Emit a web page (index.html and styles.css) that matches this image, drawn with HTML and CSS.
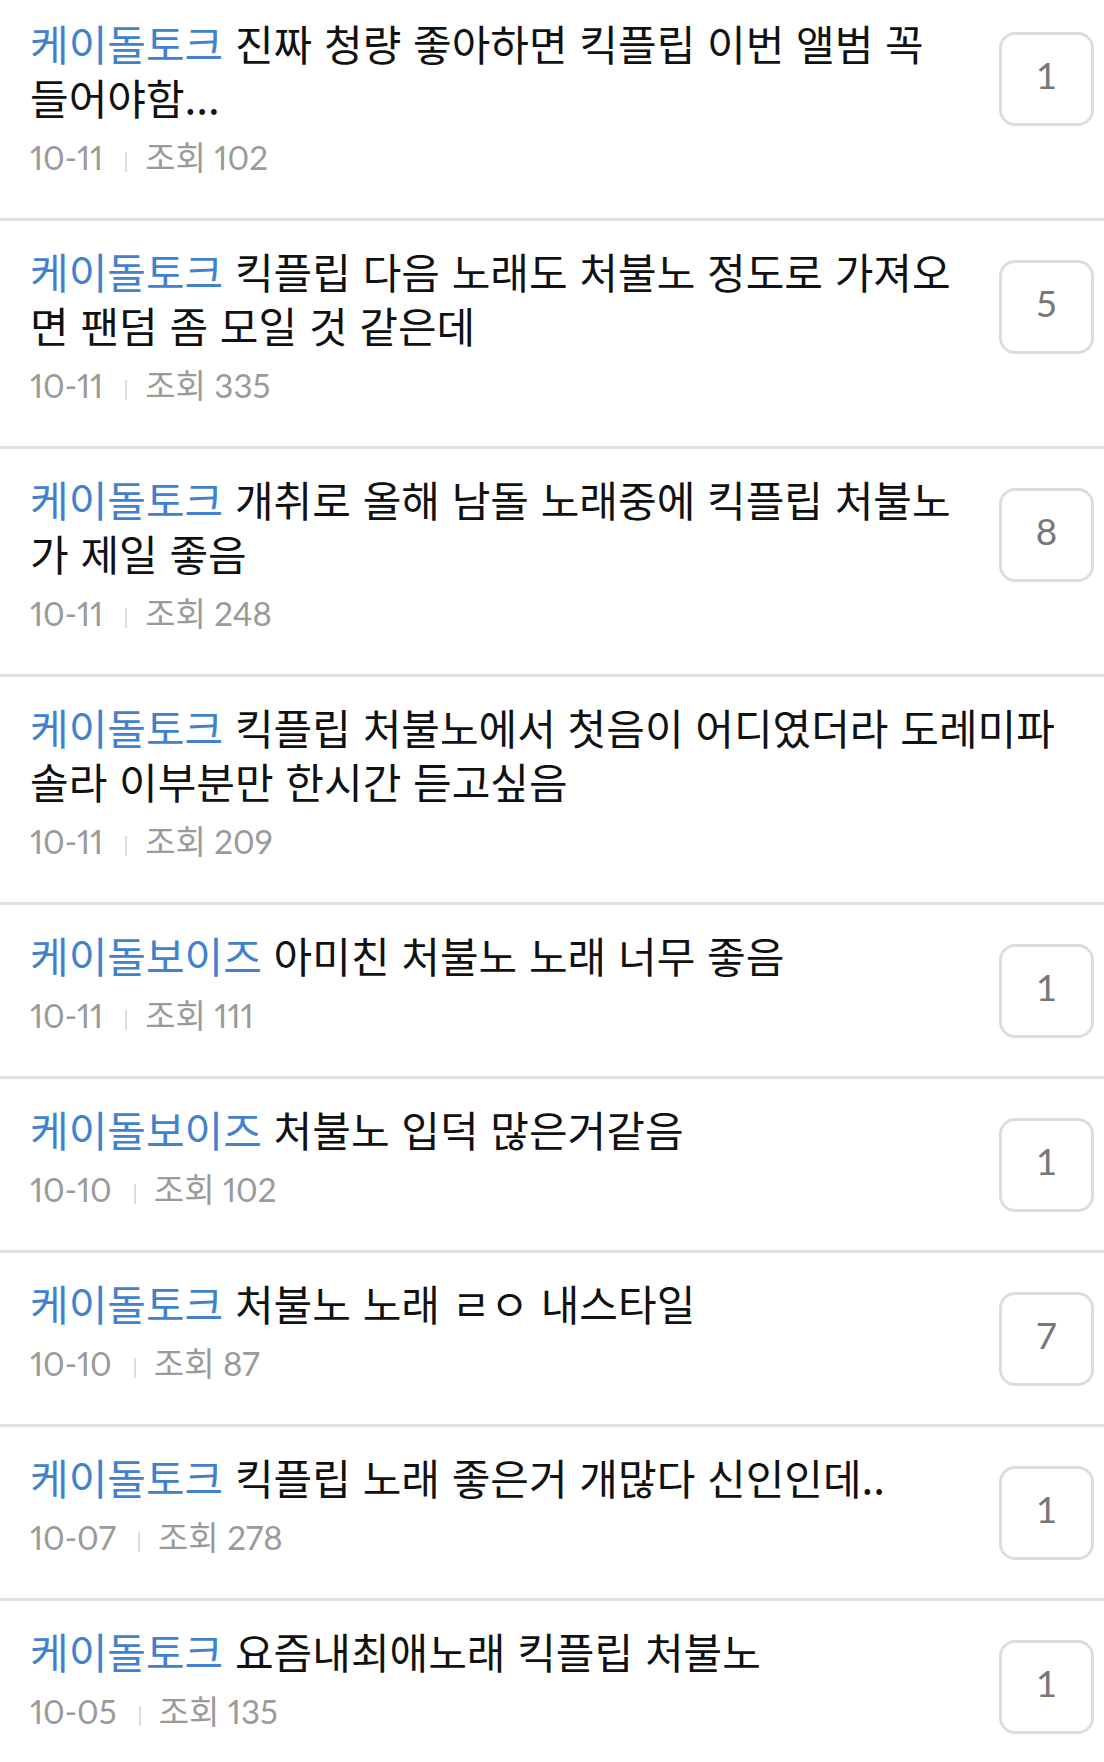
FILE: index.html
```html
<!DOCTYPE html>
<html lang="ko">
<head>
    <meta charset="UTF-8">
    <meta name="viewport" content="width=device-width, initial-scale=1.0">
    <title>처불노 검색 결과</title>
    <link rel="stylesheet" href="styles.css">
</head>
<body>
    <ul class="post-list">
        <li class="post">
            <div class="post-body">
                <p class="post-title"><span class="board">케이돌토크</span> 진짜 청량 좋아하면 킥플립 이번 앨범 꼭 들어야함...</p>
                <p class="post-meta"><span class="date">10-11</span><span class="divider"></span><span>조회 102</span></p>
            </div>
            <span class="reply-count">1</span>
        </li>
        <li class="post">
            <div class="post-body">
                <p class="post-title"><span class="board">케이돌토크</span> 킥플립 다음 노래도 처불노 정도로 가져오면 팬덤 좀 모일 것 같은데</p>
                <p class="post-meta"><span class="date">10-11</span><span class="divider"></span><span>조회 335</span></p>
            </div>
            <span class="reply-count">5</span>
        </li>
        <li class="post">
            <div class="post-body">
                <p class="post-title"><span class="board">케이돌토크</span> 개취로 올해 남돌 노래중에 킥플립 처불노가 제일 좋음</p>
                <p class="post-meta"><span class="date">10-11</span><span class="divider"></span><span>조회 248</span></p>
            </div>
            <span class="reply-count">8</span>
        </li>
        <li class="post no-reply">
            <div class="post-body">
                <p class="post-title"><span class="board">케이돌토크</span> 킥플립 처불노에서 첫음이 어디였더라 도레미파 솔라 이부분만 한시간 듣고싶음</p>
                <p class="post-meta"><span class="date">10-11</span><span class="divider"></span><span>조회 209</span></p>
            </div>
        </li>
        <li class="post">
            <div class="post-body">
                <p class="post-title"><span class="board">케이돌보이즈</span> 아미친 처불노 노래 너무 좋음</p>
                <p class="post-meta"><span class="date">10-11</span><span class="divider"></span><span>조회 111</span></p>
            </div>
            <span class="reply-count">1</span>
        </li>
        <li class="post">
            <div class="post-body">
                <p class="post-title"><span class="board">케이돌보이즈</span> 처불노 입덕 많은거같음</p>
                <p class="post-meta"><span class="date">10-10</span><span class="divider"></span><span>조회 102</span></p>
            </div>
            <span class="reply-count">1</span>
        </li>
        <li class="post">
            <div class="post-body">
                <p class="post-title"><span class="board">케이돌토크</span> 처불노 노래 ㄹㅇ 내스타일</p>
                <p class="post-meta"><span class="date">10-10</span><span class="divider"></span><span>조회 87</span></p>
            </div>
            <span class="reply-count">7</span>
        </li>
        <li class="post">
            <div class="post-body">
                <p class="post-title"><span class="board">케이돌토크</span> 킥플립 노래 좋은거 개많다 신인인데..</p>
                <p class="post-meta"><span class="date">10-07</span><span class="divider"></span><span>조회 278</span></p>
            </div>
            <span class="reply-count">1</span>
        </li>
        <li class="post">
            <div class="post-body">
                <p class="post-title"><span class="board">케이돌토크</span> 요즘내최애노래 킥플립 처불노</p>
                <p class="post-meta"><span class="date">10-05</span><span class="divider"></span><span>조회 135</span></p>
            </div>
            <span class="reply-count">1</span>
        </li>
    </ul>
</body>
</html>
```

FILE: styles.css
```css
body {
    margin: 0;
    background: #fff;
    font-family: "Noto Sans CJK KR", "Noto Sans", sans-serif;
    color: #111;
}
.post-list {
    list-style: none;
    margin: -7px 0 0;
    padding: 0;
}
.post {
    display: flex;
    align-items: flex-start;
    padding: 23px 10px 0 30px;
    border-bottom: 3px solid #e0e0e0;
}
.post.no-reply {
    padding-right: 46px;
}
.post-body {
    flex: 1;
    min-width: 0;
    padding-bottom: 41px;
}
.post-title {
    margin: 0 33px 0 0;
    font-size: 42px;
    line-height: 54px;
}
.post.no-reply .post-title {
    margin-right: 0;
}
.board {
    color: #4282cc;
}
.post-meta {
    display: flex;
    align-items: center;
    margin: 13px 0 0;
    font-family: Lato, "Noto Sans CJK KR", sans-serif;
    font-size: 33px;
    font-variant-numeric: proportional-nums;
    line-height: 40px;
    color: #9a9a9a;
}
.divider {
    width: 2px;
    height: 20px;
    margin: 10px 18px 0 22px;
    background: #ddd;
}
.reply-count {
    flex: none;
    display: flex;
    align-items: center;
    justify-content: center;
    box-sizing: border-box;
    width: 95px;
    height: 94px;
    margin-top: 16px;
    padding-bottom: 10px;
    border: 3px solid #ddd;
    border-radius: 16px;
    font-family: Lato, sans-serif;
    font-size: 37px;
    color: #777;
}
```
